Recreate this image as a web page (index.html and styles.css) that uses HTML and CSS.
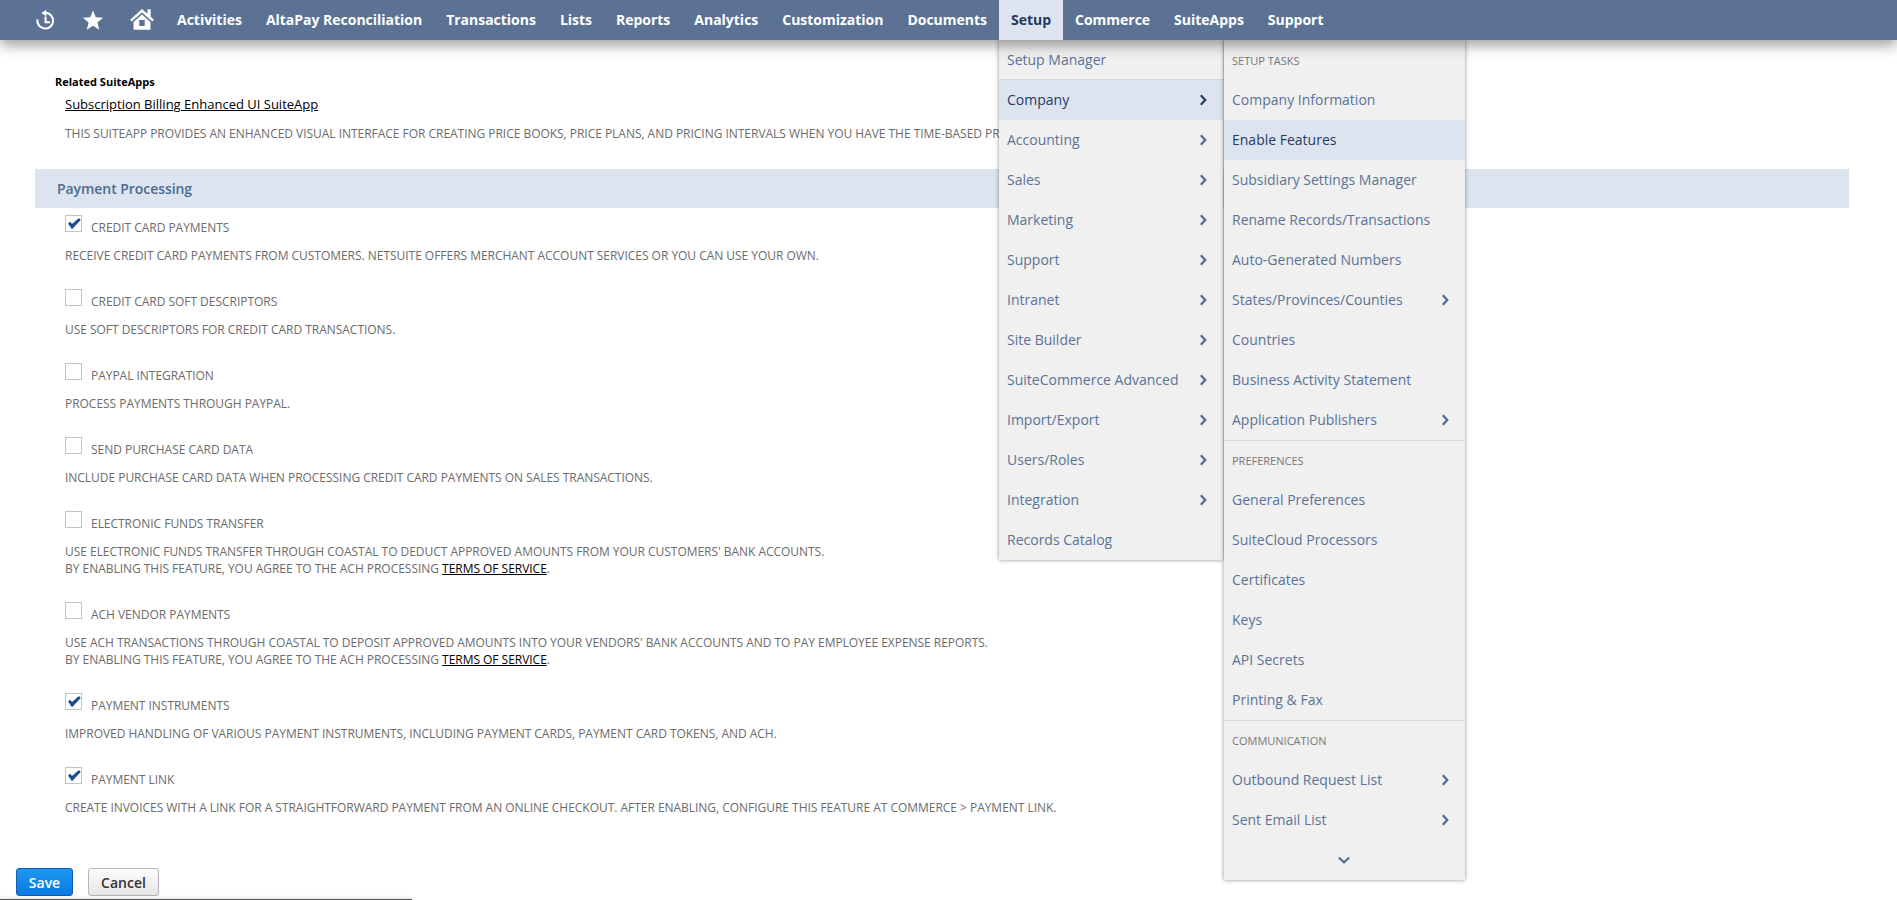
FILE: index.html
```html
<!DOCTYPE html>
<html lang="en">
<head>
<meta charset="utf-8">
<title>Enable Features</title>
<link rel="stylesheet" href="styles.css">
</head>
<body>
<header class="nav">
  <div class="nav-icons">
    <svg class="ni ni-recent" viewBox="0 0 24 24"><path d="M12.600 4.200a8.600 8.600 0 1 1-8.900 7.200" fill="none" stroke="#fff" stroke-width="2.200"/><path d="M8 4.400 13.400 0.800V8z" fill="#fff"/><path d="M12.600 8.200v6.200h4.800" fill="none" stroke="#fff" stroke-width="2.200"/></svg>
    <svg class="ni ni-star" viewBox="0 0 24 24"><path d="M12 1.500l3 7.600 8 .5-6.200 5.100 2 7.900-6.800-4.400-6.800 4.400 2-7.900L1 9.600l8-.5z" fill="#fff"/></svg>
    <svg class="ni ni-home" viewBox="0 0 24 24"><path d="M12 2.800 1 12.600l1.500 1.700L12 5.900l9.500 8.400 1.500-1.700-3-2.700V3h-3v4.200z" fill="#fff"/><path d="M12 7.800 4.200 14.700V22h15.600v-7.300zM9.500 13h5v5.500h-5z" fill="#fff" fill-rule="evenodd"/></svg>
  </div>
  <nav class="nav-items">
    <a>Activities</a><a>AltaPay Reconciliation</a><a>Transactions</a><a>Lists</a><a>Reports</a><a>Analytics</a><a>Customization</a><a>Documents</a><a class="active">Setup</a><a>Commerce</a><a>SuiteApps</a><a>Support</a>
  </nav>
</header>

<main class="page">
  <section class="related">
    <h4>Related SuiteApps</h4>
    <a class="link app-link">Subscription Billing Enhanced UI SuiteApp</a>
    <p class="desc">THIS SUITEAPP PROVIDES AN ENHANCED VISUAL INTERFACE FOR CREATING PRICE BOOKS, PRICE PLANS, AND PRICING INTERVALS WHEN YOU HAVE THE TIME-BASED PRICING FEATURE ENABLED.</p>
  </section>

  <h2 class="section-bar">Payment Processing</h2>

  <div class="features">
    <div class="feature">
      <div class="f-head"><span class="cb"><svg viewBox="0 0 17 17"><path d="M3 8.500 5.200 6.800 7 9 14 3l1.700 2L7 14.300z" fill="#1a4c8f"/></svg></span><label>CREDIT CARD PAYMENTS</label></div>
      <p class="desc">RECEIVE CREDIT CARD PAYMENTS FROM CUSTOMERS. NETSUITE OFFERS MERCHANT ACCOUNT SERVICES OR YOU CAN USE YOUR OWN.</p>
    </div>
    <div class="feature">
      <div class="f-head"><span class="cb"></span><label>CREDIT CARD SOFT DESCRIPTORS</label></div>
      <p class="desc">USE SOFT DESCRIPTORS FOR CREDIT CARD TRANSACTIONS.</p>
    </div>
    <div class="feature">
      <div class="f-head"><span class="cb"></span><label>PAYPAL INTEGRATION</label></div>
      <p class="desc">PROCESS PAYMENTS THROUGH PAYPAL.</p>
    </div>
    <div class="feature">
      <div class="f-head"><span class="cb"></span><label>SEND PURCHASE CARD DATA</label></div>
      <p class="desc">INCLUDE PURCHASE CARD DATA WHEN PROCESSING CREDIT CARD PAYMENTS ON SALES TRANSACTIONS.</p>
    </div>
    <div class="feature">
      <div class="f-head"><span class="cb"></span><label>ELECTRONIC FUNDS TRANSFER</label></div>
      <p class="desc">USE ELECTRONIC FUNDS TRANSFER THROUGH COASTAL TO DEDUCT APPROVED AMOUNTS FROM YOUR CUSTOMERS' BANK ACCOUNTS.<br>BY ENABLING THIS FEATURE, YOU AGREE TO THE ACH PROCESSING <a class="link">TERMS OF SERVICE</a>.</p>
    </div>
    <div class="feature">
      <div class="f-head"><span class="cb"></span><label>ACH VENDOR PAYMENTS</label></div>
      <p class="desc">USE ACH TRANSACTIONS THROUGH COASTAL TO DEPOSIT APPROVED AMOUNTS INTO YOUR VENDORS' BANK ACCOUNTS AND TO PAY EMPLOYEE EXPENSE REPORTS.<br>BY ENABLING THIS FEATURE, YOU AGREE TO THE ACH PROCESSING <a class="link">TERMS OF SERVICE</a>.</p>
    </div>
    <div class="feature">
      <div class="f-head"><span class="cb"><svg viewBox="0 0 17 17"><path d="M3 8.500 5.200 6.800 7 9 14 3l1.700 2L7 14.300z" fill="#1a4c8f"/></svg></span><label>PAYMENT INSTRUMENTS</label></div>
      <p class="desc">IMPROVED HANDLING OF VARIOUS PAYMENT INSTRUMENTS, INCLUDING PAYMENT CARDS, PAYMENT CARD TOKENS, AND ACH.</p>
    </div>
    <div class="feature">
      <div class="f-head"><span class="cb"><svg viewBox="0 0 17 17"><path d="M3 8.500 5.200 6.800 7 9 14 3l1.700 2L7 14.300z" fill="#1a4c8f"/></svg></span><label>PAYMENT LINK</label></div>
      <p class="desc">CREATE INVOICES WITH A LINK FOR A STRAIGHTFORWARD PAYMENT FROM AN ONLINE CHECKOUT. AFTER ENABLING, CONFIGURE THIS FEATURE AT COMMERCE &gt; PAYMENT LINK.</p>
    </div>
  </div>

  <div class="actions">
    <button class="btn primary">Save</button>
    <button class="btn">Cancel</button>
  </div>
</main>
<div class="bottom-line"></div>

<div class="menu menu-main">
  <a class="mi first">Setup Manager</a>
  <a class="mi hot">Company<svg class="chev" viewBox="0 0 10 14"><path d="M1.800 2.300 6.300 7 1.800 11.700"/></svg></a>
  <a class="mi">Accounting<svg class="chev" viewBox="0 0 10 14"><path d="M1.800 2.300 6.300 7 1.800 11.700"/></svg></a>
  <a class="mi">Sales<svg class="chev" viewBox="0 0 10 14"><path d="M1.800 2.300 6.300 7 1.800 11.700"/></svg></a>
  <a class="mi">Marketing<svg class="chev" viewBox="0 0 10 14"><path d="M1.800 2.300 6.300 7 1.800 11.700"/></svg></a>
  <a class="mi">Support<svg class="chev" viewBox="0 0 10 14"><path d="M1.800 2.300 6.300 7 1.800 11.700"/></svg></a>
  <a class="mi">Intranet<svg class="chev" viewBox="0 0 10 14"><path d="M1.800 2.300 6.300 7 1.800 11.700"/></svg></a>
  <a class="mi">Site Builder<svg class="chev" viewBox="0 0 10 14"><path d="M1.800 2.300 6.300 7 1.800 11.700"/></svg></a>
  <a class="mi">SuiteCommerce Advanced<svg class="chev" viewBox="0 0 10 14"><path d="M1.800 2.300 6.300 7 1.800 11.700"/></svg></a>
  <a class="mi">Import/Export<svg class="chev" viewBox="0 0 10 14"><path d="M1.800 2.300 6.300 7 1.800 11.700"/></svg></a>
  <a class="mi">Users/Roles<svg class="chev" viewBox="0 0 10 14"><path d="M1.800 2.300 6.300 7 1.800 11.700"/></svg></a>
  <a class="mi">Integration<svg class="chev" viewBox="0 0 10 14"><path d="M1.800 2.300 6.300 7 1.800 11.700"/></svg></a>
  <a class="mi">Records Catalog</a>
</div>

<div class="menu menu-sub">
  <div class="mh">SETUP TASKS</div>
  <a class="mi">Company Information</a>
  <a class="mi hot">Enable Features</a>
  <a class="mi">Subsidiary Settings Manager</a>
  <a class="mi">Rename Records/Transactions</a>
  <a class="mi">Auto-Generated Numbers</a>
  <a class="mi">States/Provinces/Counties<svg class="chev" viewBox="0 0 10 14"><path d="M1.800 2.300 6.300 7 1.800 11.700"/></svg></a>
  <a class="mi">Countries</a>
  <a class="mi">Business Activity Statement</a>
  <a class="mi">Application Publishers<svg class="chev" viewBox="0 0 10 14"><path d="M1.800 2.300 6.300 7 1.800 11.700"/></svg></a>
  <div class="mh sep">PREFERENCES</div>
  <a class="mi">General Preferences</a>
  <a class="mi">SuiteCloud Processors</a>
  <a class="mi">Certificates</a>
  <a class="mi">Keys</a>
  <a class="mi">API Secrets</a>
  <a class="mi">Printing &amp; Fax</a>
  <div class="mh sep">COMMUNICATION</div>
  <a class="mi">Outbound Request List<svg class="chev" viewBox="0 0 10 14"><path d="M1.800 2.300 6.300 7 1.800 11.700"/></svg></a>
  <a class="mi">Sent Email List<svg class="chev" viewBox="0 0 10 14"><path d="M1.800 2.300 6.300 7 1.800 11.700"/></svg></a>
  <div class="more"><svg viewBox="0 0 14 10"><path d="M1.800 2.500 7 7.300 12.200 2.500"/></svg></div>
</div>
</body>
</html>
```

FILE: styles.css
```css
* { box-sizing: border-box; }
html, body { margin: 0; padding: 0; height: 900px; overflow: hidden; background: #fff; }
body { font-family: "Open Sans", "Noto Sans", sans-serif; position: relative; }
p, h2, h4 { margin: 0; }

.nav {
  height: 40px;
  background: #5b7295;
  display: flex;
  align-items: stretch;
  position: relative;
  z-index: 2;
  box-shadow: 0 6px 12px rgba(0,0,0,.35);
}
.nav-icons { display: flex; align-items: center; width: 165px; flex: none; padding-left: 34px; }
.ni { display: block; flex: none; }
.ni-recent { width: 22px; height: 22px; }
.ni-star { width: 22px; height: 22px; margin-left: 26px; }
.ni-home { width: 26px; height: 26px; margin-left: 25px; margin-top: -2px; }
.nav-items { display: flex; align-items: stretch; }
.nav-items a {
  display: flex;
  align-items: center;
  padding: 0 12px 1px;
  color: #fff;
  font-size: 14px;
  font-weight: 700;
  letter-spacing: -.015px;
}
.nav-items a.active { background: #dee4ef; color: #1f3a63; }

.page { padding: 34px 48px 0 16px; }
.related { padding-left: 39px; }
.related h4 { font-size: 11px; font-weight: 700; color: #000; line-height: 16px; }
.app-link { display: block; margin: 5px 0 0 10px; font-size: 13px; line-height: 18px; }
.related .desc { margin: 12px 0 0 10px; white-space: nowrap; }
.link { color: #000; text-decoration: underline; }
.desc { font-size: 12px; line-height: 17px; color: #6b6b6b; letter-spacing: -.03px; }

.section-bar {
  margin: 27px 0 0 19px;
  height: 39px;
  padding-left: 22px;
  background: #dee4ef;
  color: #4d6a91;
  font-size: 14px;
  line-height: 39px;
  font-weight: 600;
  letter-spacing: -.06px;
}
.features { padding: 7px 0 0 49px; }
.feature { padding-bottom: 25px; }
.f-head { display: flex; height: 26px; }
.f-head label { font-size: 12px; line-height: 17px; color: #6b6b6b; letter-spacing: -.03px; margin: 4px 0 0 9px; }
.cb { display: block; position: relative; width: 17px; height: 17px; border: 1px solid #c4c4c4; background: #fff; flex: none; }
.cb svg { position: absolute; left: -1px; top: -1px; width: 17px; height: 17px; }
.feature .desc { margin-top: 6px; }

.actions { display: flex; gap: 15px; padding-top: 27px; }
.btn {
  height: 28px;
  padding: 0;
  font: 600 14px "Open Sans", sans-serif;
  border-radius: 3px;
  border: 1px solid #b5b5b5;
  background: linear-gradient(#fcfcfc, #e6e6e6);
  color: #333;
  width: 71px;
}
.btn.primary {
  width: 57px;
  border-color: #125ab2;
  background: linear-gradient(#1d98f2, #0a7ae0);
  color: #fff;
}
.bottom-line { position: absolute; left: 0; bottom: 0; width: 412px; height: 1px; background: #555; box-shadow: 0 -1px 3px rgba(0,0,0,.25); }

.menu {
  position: absolute;
  top: 40px;
  z-index: 1;
  background: #f0f0f0;
  box-shadow: 0 0 4px rgba(0,0,0,.45);
}
.menu-main { left: 999px; width: 224px; }
.menu-sub { left: 1224px; width: 241px; }
.mi {
  display: flex;
  align-items: center;
  justify-content: space-between;
  height: 40px;
  padding: 0 14px 1px 8px;
  color: #5a7396;
  font-size: 14px;
}
.mi.hot { background: #dee4ef; color: #243c63; }
.mi.first { border-bottom: 1px solid #d6d6d6; padding-bottom: 0; }
.chev { width: 10px; height: 14px; flex: none; }
.chev path { fill: none; stroke: #4f6a90; stroke-width: 2.2; }
.mi.hot .chev path { stroke: #243c63; }
.mh { height: 40px; padding: 0 8px; font-size: 11px; line-height: 42px; color: #777; font-kerning: none; }
.mh.sep { border-top: 1px solid #dcdcdc; line-height: 40px; }
.more { height: 40px; display: flex; align-items: center; justify-content: center; padding-right: 2px; }
.more svg { width: 14px; height: 10px; }
.more path { fill: none; stroke: #4f6a90; stroke-width: 2; }
```
